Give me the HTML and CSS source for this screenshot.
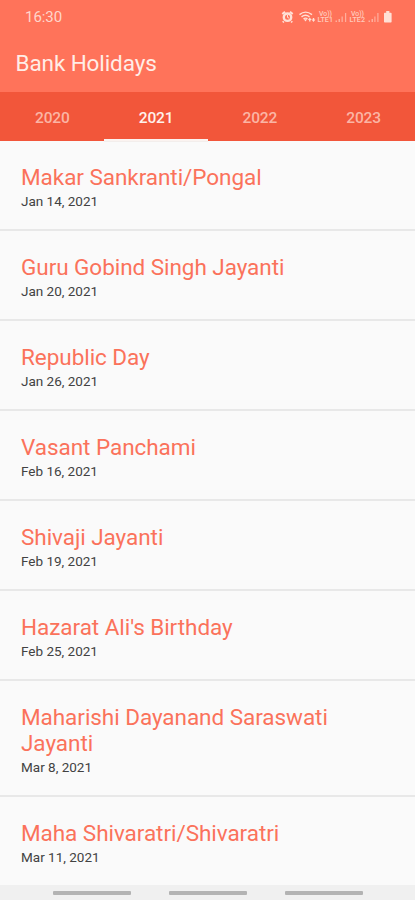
FILE: index.html
```html
<!DOCTYPE html>
<html lang="en">
<head>
<meta charset="utf-8">
<title>Bank Holidays</title>
<link rel="stylesheet" href="styles.css">
</head>
<body>
<div class="screen">
  <header class="header">
    <div class="status">
      <span class="clock">16:30</span>
      <svg class="status-icons" width="112" height="16" viewBox="0 0 112 16">
        <g fill="none" stroke="currentColor">
          <circle cx="6.5" cy="8.2" r="3.7" stroke-width="2.400"/>
          <path d="M1.300 5 4 2.800M11.700 5 9 2.800M2.800 12.400l-1 1M10.200 12.400l1 1" stroke-width="2"/>
          <path d="M6.500 6v2.400l1.700.8" stroke-width="1"/>
          <path d="M18.500 5.600q6-5 12.500 0M20.500 7.900q4-3.300 8 0M22.500 9.900q2-1.500 4 0" stroke-width="1.400"/>
        </g>
        <g fill="currentColor">
          <path d="m24.500 12.600-1.700-2.300h3.400zM28.800 8.600l1.900 2.500h-1.200v1.500h-1.400v-1.500h-1.200zM32.500 13.100 30.600 10.600h1.200V9.100h1.400v1.500h1.200z"/>
          <path d="M54.500 11.500H56v1.500h-1.500zM57.500 10H59v3h-1.500zM60.500 7.500h1.300V13h-1.300zM64 4h1.200v9H64zM87.500 11.500H89v1.500h-1.500zM90.500 10H92v3h-1.500zM93.300 7.500h1.200V13h-1.200zM96.300 4h1.200v9h-1.200z" opacity=".55"/>
          <path d="M103.700 3.700h1.500V2h3.200v1.700h1.500q.7 0 .7.700v8.400q0 .7-.7.700h-6.200q-.7 0-.7-.7V4.400q0-.7.700-.7z"/>
          <g class="volte">
            <text x="38" y="7" textLength="13" lengthAdjust="spacingAndGlyphs">Vo))</text>
            <text x="36.500" y="13.300" textLength="15.500" lengthAdjust="spacingAndGlyphs">LTE1</text>
            <text x="70" y="7" textLength="13" lengthAdjust="spacingAndGlyphs">Vo))</text>
            <text x="68.500" y="13.300" textLength="15.500" lengthAdjust="spacingAndGlyphs">LTE2</text>
          </g>
        </g>
      </svg>
    </div>
    <h1 class="heading">Bank Holidays</h1>
  </header>
  <nav class="tabs">
    <a class="tab">2020</a>
    <a class="tab active">2021</a>
    <a class="tab">2022</a>
    <a class="tab">2023</a>
  </nav>
  <ul class="list">
    <li class="item"><h2 class="name">Makar Sankranti/Pongal</h2><p class="date">Jan 14, 2021</p></li>
    <li class="item"><h2 class="name">Guru Gobind Singh Jayanti</h2><p class="date">Jan 20, 2021</p></li>
    <li class="item"><h2 class="name">Republic Day</h2><p class="date">Jan 26, 2021</p></li>
    <li class="item"><h2 class="name">Vasant Panchami</h2><p class="date">Feb 16, 2021</p></li>
    <li class="item"><h2 class="name">Shivaji Jayanti</h2><p class="date">Feb 19, 2021</p></li>
    <li class="item"><h2 class="name">Hazarat Ali's Birthday</h2><p class="date">Feb 25, 2021</p></li>
    <li class="item"><h2 class="name">Maharishi Dayanand Saraswati Jayanti</h2><p class="date">Mar 8, 2021</p></li>
    <li class="item"><h2 class="name">Maha Shivaratri/Shivaratri</h2><p class="date">Mar 11, 2021</p></li>
  </ul>
  <footer class="gestures"><i class="hint"></i><i class="hint"></i><i class="hint"></i></footer>
</div>
</body>
</html>
```
FILE: styles.css
```css
* { box-sizing: border-box; }
body { margin: 0; font-family: Roboto, "Liberation Sans", sans-serif; background: #fafafa; }
h1, h2, p, ul { margin: 0; padding: 0; font-weight: 400; }
.screen { display: flex; flex-direction: column; width: 415px; height: 900px; overflow: hidden; }
.header { flex: none; height: 92px; background: #ff735a; color: #ffe9e3; }
.status { display: flex; justify-content: space-between; align-items: center; height: 34px; padding: 0 22px 0 25px; color: #ffd6cb; }
.clock { padding-top: 1px; font-size: 15px; line-height: 33px; letter-spacing: -0.05px; }
.status-icons { display: block; color: #ffe0d6; }
.volte { font-size: 7px; font-weight: 500; opacity: .8; }
.heading { padding-left: 15.5px; font-size: 22.5px; line-height: 58px; letter-spacing: -0.1px; color: #ffede7; }
.tabs { flex: none; display: grid; grid-template-columns: repeat(4, 1fr); height: 49px; background: #f2563a; }
.tab { display: flex; align-items: center; justify-content: center; padding: 3px 0 0 1px; border-bottom: 1px solid #f2563a; font-size: 15.5px; font-weight: 500; letter-spacing: -0.1px; color: #fbb5a5; }
.tab.active { padding-top: 4px; border-bottom: 2px solid #fbf3f0; box-shadow: 0 1px 0 #f3eeec; color: #fff1ec; }
.list { flex: 1; min-height: 0; overflow: hidden; list-style: none; }
.item { padding: 23px 50px 18px 21px; border-bottom: 2px solid #e8e8e8; }
.name { font-size: 22.5px; line-height: 26px; letter-spacing: -0.05px; color: #fb725b; }
.date { padding-top: 2px; font-size: 13.5px; line-height: 19px; color: #424242; }
.gestures { flex: none; display: flex; justify-content: center; gap: 38px; height: 15px; padding-top: 6px; background: #f0f0f0; }
.hint { width: 78px; height: 4px; border-radius: 1px; background: #b3b3b3; }
```
